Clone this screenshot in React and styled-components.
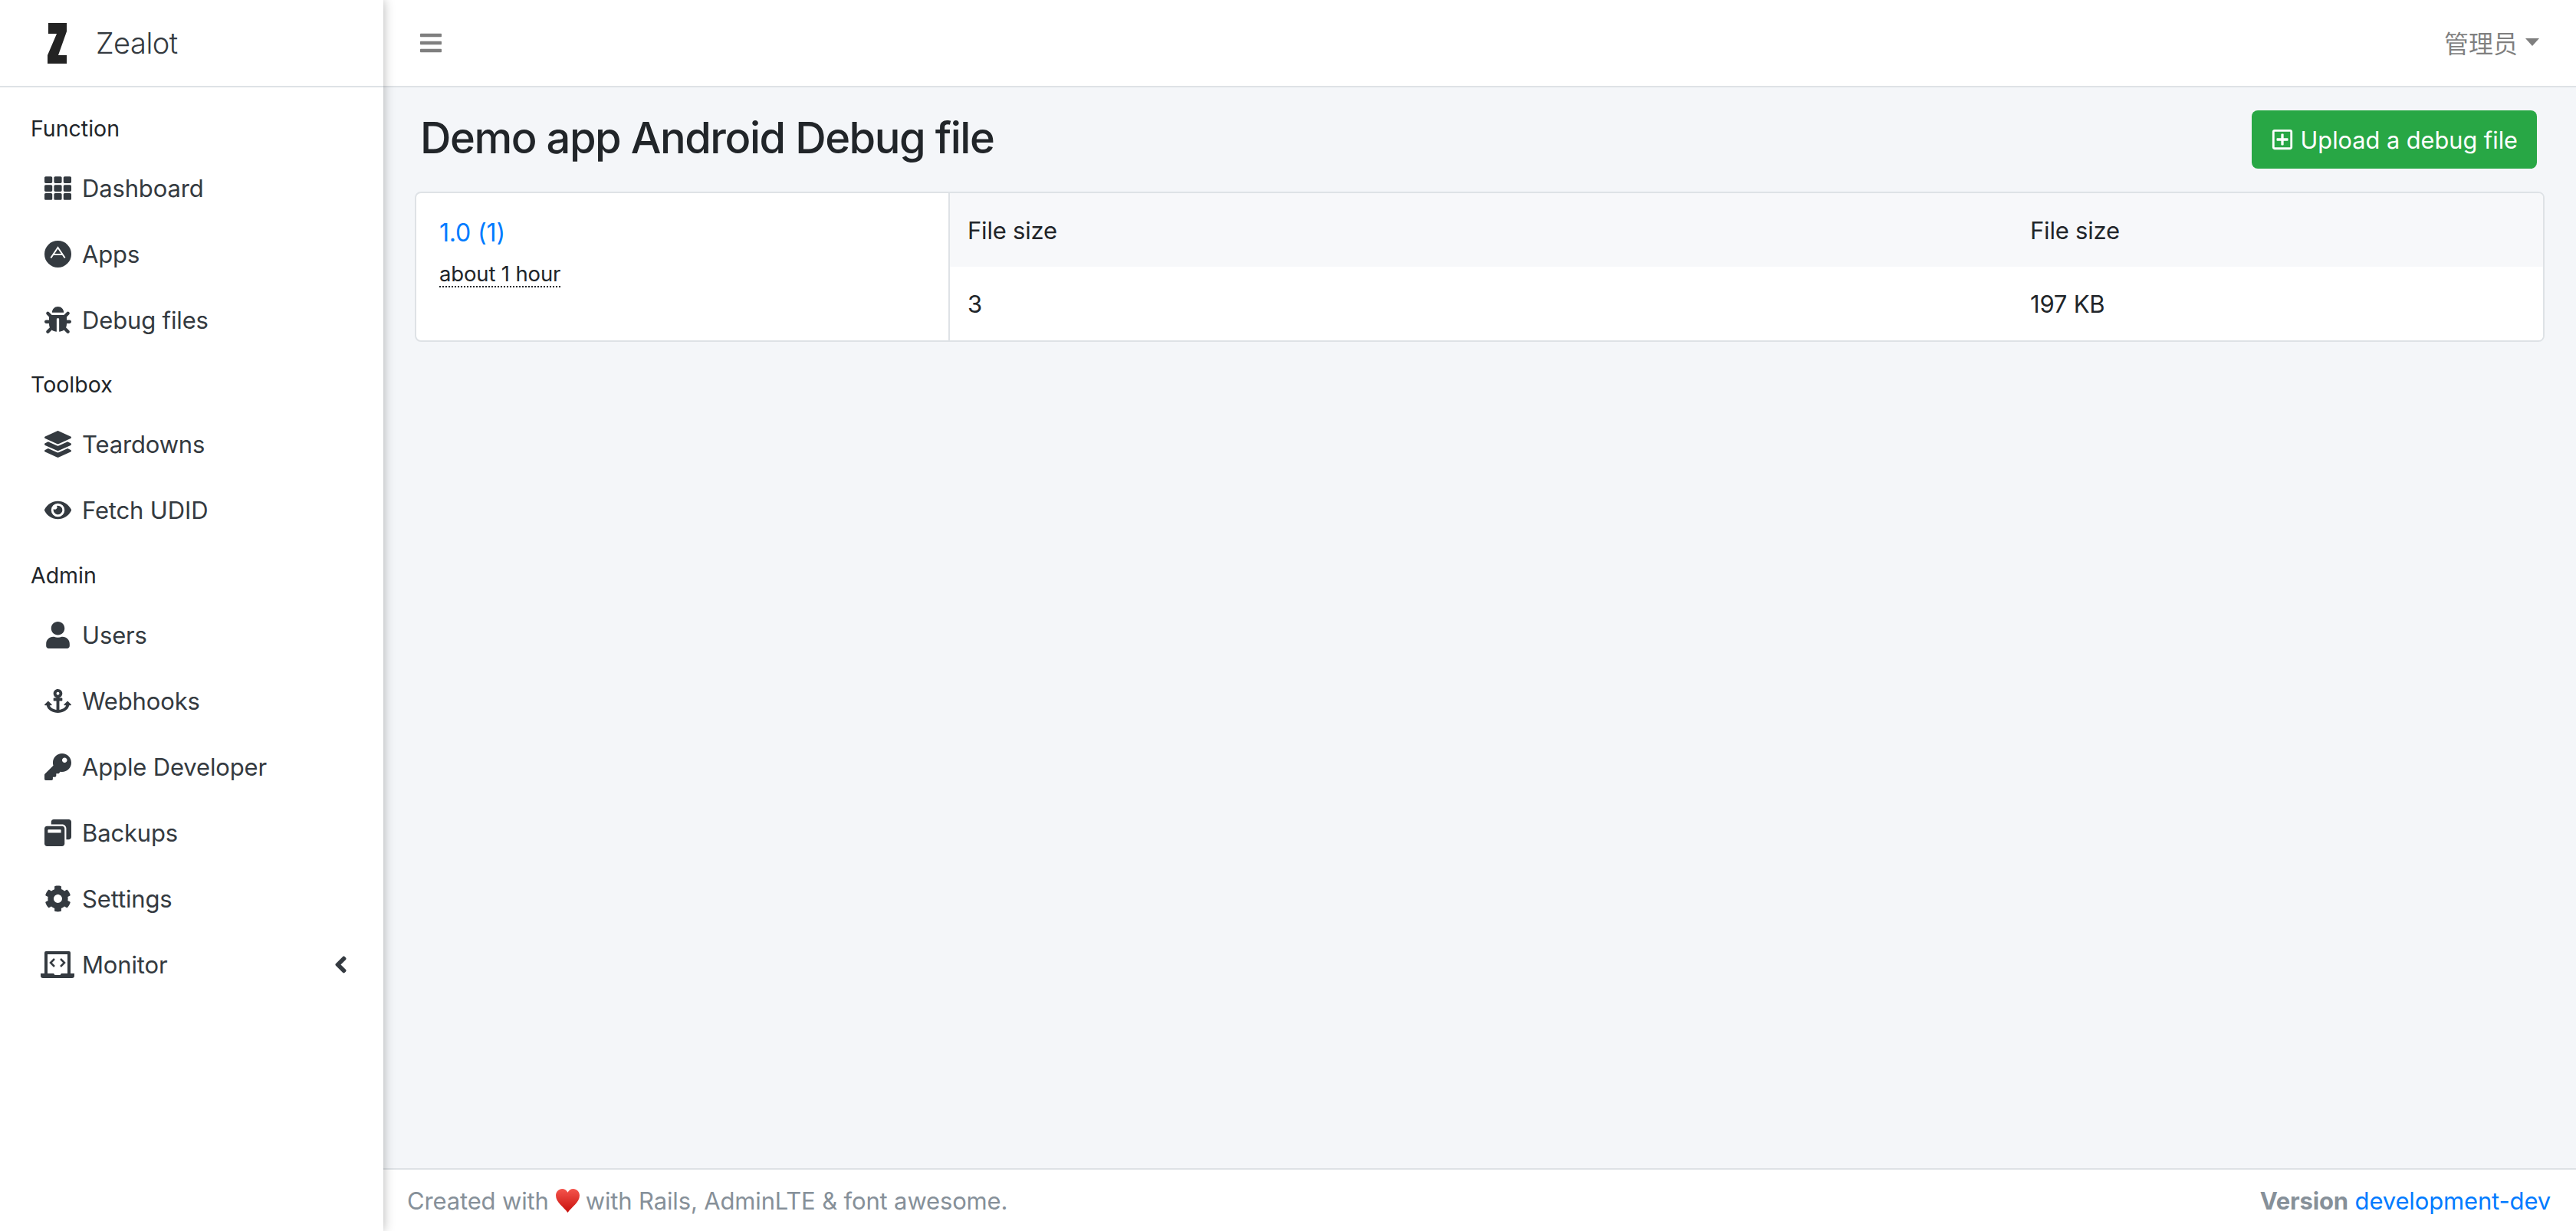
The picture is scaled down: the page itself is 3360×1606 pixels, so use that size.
import React from "react";
import styled, { createGlobalStyle } from "styled-components";
import {
  FaTh,
  FaBug,
  FaLayerGroup,
  FaEye,
  FaUser,
  FaAnchor,
  FaKey,
  FaWindowRestore,
  FaCog,
  FaAngleLeft,
  FaBars,
  FaRegPlusSquare,
} from "react-icons/fa";

const GlobalStyle = createGlobalStyle`
  html, body {
    margin: 0;
    padding: 0;
    background: #f4f6f9;
  }
  body {
    font-family: Inter, "Noto Sans CJK SC", sans-serif;
    font-size: 31px;
    letter-spacing: -0.15px;
    color: #212529;
  }
  * {
    box-sizing: border-box;
  }
`;

const Layout = styled.div`
  display: grid;
  grid-template-columns: 500px 1fr;
  width: 3360px;
  height: 1606px;
  overflow: hidden;
`;

const Sidebar = styled.aside`
  position: relative;
  z-index: 2;
  background: #fff;
  box-shadow: 0 0 14px rgba(0, 0, 0, 0.3);
`;

const Brand = styled.div`
  display: flex;
  align-items: center;
  height: 114px;
  padding-left: 62px;
  gap: 38px;
  border-bottom: 2px solid #dee2e6;
`;

const BrandName = styled.span`
  font-size: 38px;
  font-weight: 300;
  letter-spacing: -0.5px;
  color: #343a40;
`;

const Nav = styled.nav`
  display: flex;
  flex-direction: column;
  gap: 6.5px;
  padding-top: 18px;
`;

const Section = styled.div`
  display: flex;
  flex-direction: column;
`;

const SectionLabel = styled.div`
  display: flex;
  align-items: center;
  height: 70px;
  padding-left: 40px;
  font-size: 28.5px;
  letter-spacing: 0;
  color: #212529;
`;

const NavItem = styled.a`
  display: flex;
  align-items: center;
  height: 86px;
  padding: 0 38px 0 50px;
  color: #343a40;
`;

const NavIcon = styled.span`
  display: flex;
  align-items: center;
  justify-content: center;
  width: 50px;
  margin-right: 7px;

  svg {
    height: 35px;
    width: auto;
  }
`;

const Collapse = styled.span`
  display: flex;
  margin-left: auto;

  svg {
    height: 35px;
    width: auto;
  }
`;

const Main = styled.div`
  display: flex;
  flex-direction: column;
  min-width: 0;
`;

const Topbar = styled.header`
  display: flex;
  align-items: center;
  justify-content: space-between;
  height: 114px;
  padding: 0 48px 0 46px;
  background: #fff;
  border-bottom: 2px solid #dee2e6;
  color: rgba(0, 0, 0, 0.5);
`;

const MenuButton = styled.span`
  display: flex;

  svg {
    height: 32px;
    width: auto;
  }
`;

const UserMenu = styled.span`
  display: flex;
  align-items: center;
  gap: 10px;
  padding-bottom: 2px;
  font-family: "Noto Sans CJK SC", sans-serif;
  font-size: 32px;
  letter-spacing: 0;
`;

const Caret = styled.span`
  width: 0;
  height: 0;
  border-top: 10px solid rgba(0, 0, 0, 0.5);
  border-left: 9px solid transparent;
  border-right: 9px solid transparent;
`;

const Content = styled.main`
  flex: 1;
  padding: 30px 41px 0;
  background: #f4f6f9;
`;

const TitleRow = styled.div`
  display: flex;
  align-items: center;
  justify-content: space-between;
  height: 76px;
  padding: 0 10px 0 7px;
  margin-bottom: 30px;
`;

const Title = styled.h1`
  margin: 0;
  padding-bottom: 4px;
  font-size: 56px;
  font-weight: 500;
  letter-spacing: -1.45px;
  color: #212529;
`;

const UploadButton = styled.button`
  display: flex;
  align-items: center;
  gap: 9px;
  height: 76px;
  padding: 0 25px;
  border: none;
  border-radius: 8px;
  background: #28a745;
  color: #fff;
  font-family: inherit;
  font-size: 30.7px;

  svg {
    width: 30px;
    height: 30px;
  }
`;

const Card = styled.section`
  display: grid;
  grid-template-columns: 696px 1fr;
  width: 2778px;
  height: 196px;
  overflow: hidden;
  background: #fff;
  border: 2px solid #dee2e6;
  border-radius: 8px;
`;

const Release = styled.div`
  padding: 30px;
  border-right: 2px solid #dee2e6;
`;

const ReleaseLink = styled.a`
  display: block;
  height: 44px;
  line-height: 44px;
  font-size: 32px;
  color: #007bff;
`;

const ReleaseTime = styled.span`
  display: inline-block;
  margin-top: 15px;
  font-size: 27.5px;
  line-height: 32px;
  color: #212529;
  border-bottom: 2px dotted #212529;
`;

const FileTable = styled.div`
  display: grid;
  grid-template-columns: 1386px 1fr;
  grid-template-rows: 96px 1fr;
`;

const FileCell = styled.div`
  display: flex;
  align-items: center;
  padding-left: 23px;
  font-size: 31px;
  letter-spacing: -0.2px;
  background: ${(props) => (props.$head ? "#f7f8fa" : "#fff")};
  color: #212529;
`;

const Footer = styled.footer`
  display: flex;
  align-items: center;
  justify-content: space-between;
  height: 82px;
  padding: 0 33px 0 31px;
  background: #fff;
  border-top: 2px solid #dee2e6;
  color: #869099;
`;

const FooterNote = styled.span`
  display: flex;
  align-items: center;
`;

const Heart = styled.svg`
  width: 33px;
  height: 33px;
  margin: 0 7px 0 8px;
`;

const VersionLabel = styled.b`
  font-weight: 700;
`;

const VersionLink = styled.a`
  color: #007bff;
`;

const AppsIcon = () => (
  <svg viewBox="0 0 35 35">
    <circle cx="17.500" cy="17.500" r="17.500" fill="currentColor" />
    <path
      d="M8.300 22.500L17.500 9l9.200 13.500M12 18h11"
      fill="none"
      stroke="#fff"
      strokeWidth="2"
    />
  </svg>
);

const LaptopIcon = () => (
  <svg viewBox="0 0 44 35">
    <path
      fill="currentColor"
      fillRule="evenodd"
      d="M7 0h30a2 2 0 0 1 2 2v27h-4V4H9v25H5V2a2 2 0 0 1 2-2zM0 29h17l1.500 2h7l1.500-2h17v3a3 3 0 0 1-3 3H3a3 3 0 0 1-3-3z"
    />
    <path
      fill="none"
      stroke="currentColor"
      strokeWidth="2.500"
      d="M18 10l-5 5 5 5M26 10l5 5-5 5"
    />
  </svg>
);

const sections = [
  {
    label: "Function",
    items: [
      { name: "Dashboard", icon: FaTh },
      { name: "Apps", icon: AppsIcon },
      { name: "Debug files", icon: FaBug },
    ],
  },
  {
    label: "Toolbox",
    items: [
      { name: "Teardowns", icon: FaLayerGroup },
      { name: "Fetch UDID", icon: FaEye },
    ],
  },
  {
    label: "Admin",
    items: [
      { name: "Users", icon: FaUser },
      { name: "Webhooks", icon: FaAnchor },
      { name: "Apple Developer", icon: FaKey },
      { name: "Backups", icon: FaWindowRestore },
      { name: "Settings", icon: FaCog },
      { name: "Monitor", icon: LaptopIcon, collapsible: true },
    ],
  },
];

const Logo = () => (
  <svg width="25" height="53" viewBox="0 0 25 53">
    <polygon
      fill="#232323"
      points="1,0 25,0 25,11 14,42 25,42 25,53 0,53 0,42 12,14 1,14"
    />
  </svg>
);

const App = () => {
  return (
    <Layout>
      <GlobalStyle />
      <Sidebar>
        <Brand>
          <Logo />
          <BrandName>Zealot</BrandName>
        </Brand>
        <Nav>
          {sections.map((section) => (
            <Section key={section.label}>
              <SectionLabel>{section.label}</SectionLabel>
              {section.items.map((item) => (
                <NavItem key={item.name}>
                  <NavIcon>
                    <item.icon />
                  </NavIcon>
                  {item.name}
                  {item.collapsible && (
                    <Collapse>
                      <FaAngleLeft />
                    </Collapse>
                  )}
                </NavItem>
              ))}
            </Section>
          ))}
        </Nav>
      </Sidebar>
      <Main>
        <Topbar>
          <MenuButton>
            <FaBars />
          </MenuButton>
          <UserMenu>
            管理员
            <Caret />
          </UserMenu>
        </Topbar>
        <Content>
          <TitleRow>
            <Title>Demo app Android Debug file</Title>
            <UploadButton>
              <FaRegPlusSquare />
              Upload a debug file
            </UploadButton>
          </TitleRow>
          <Card>
            <Release>
              <ReleaseLink>1.0 (1)</ReleaseLink>
              <ReleaseTime>about 1 hour</ReleaseTime>
            </Release>
            <FileTable>
              <FileCell $head>File size</FileCell>
              <FileCell $head>File size</FileCell>
              <FileCell>3</FileCell>
              <FileCell>197 KB</FileCell>
            </FileTable>
          </Card>
        </Content>
        <Footer>
          <FooterNote>
            Created with
            <Heart viewBox="0 0 32 32">
              <defs>
                <linearGradient id="heartFill" x1="0" y1="0" x2="0" y2="1">
                  <stop offset="0" stopColor="#f4544c" />
                  <stop offset="1" stopColor="#c8100c" />
                </linearGradient>
              </defs>
              <path
                fill="url(#heartFill)"
                d="M16 31C11 24 1 18 1 9.500C1 4.500 4.800 1 9 1c3 0 5.600 1.600 7 4.500C17.400 2.600 20 1 23 1c4.200 0 8 3.500 8 8.500C31 18 21 24 16 31z"
              />
            </Heart>
            with Rails, AdminLTE &amp; font awesome.
          </FooterNote>
          <span>
            <VersionLabel>Version</VersionLabel>{" "}
            <VersionLink>development-dev</VersionLink>
          </span>
        </Footer>
      </Main>
    </Layout>
  );
};

export default App;
